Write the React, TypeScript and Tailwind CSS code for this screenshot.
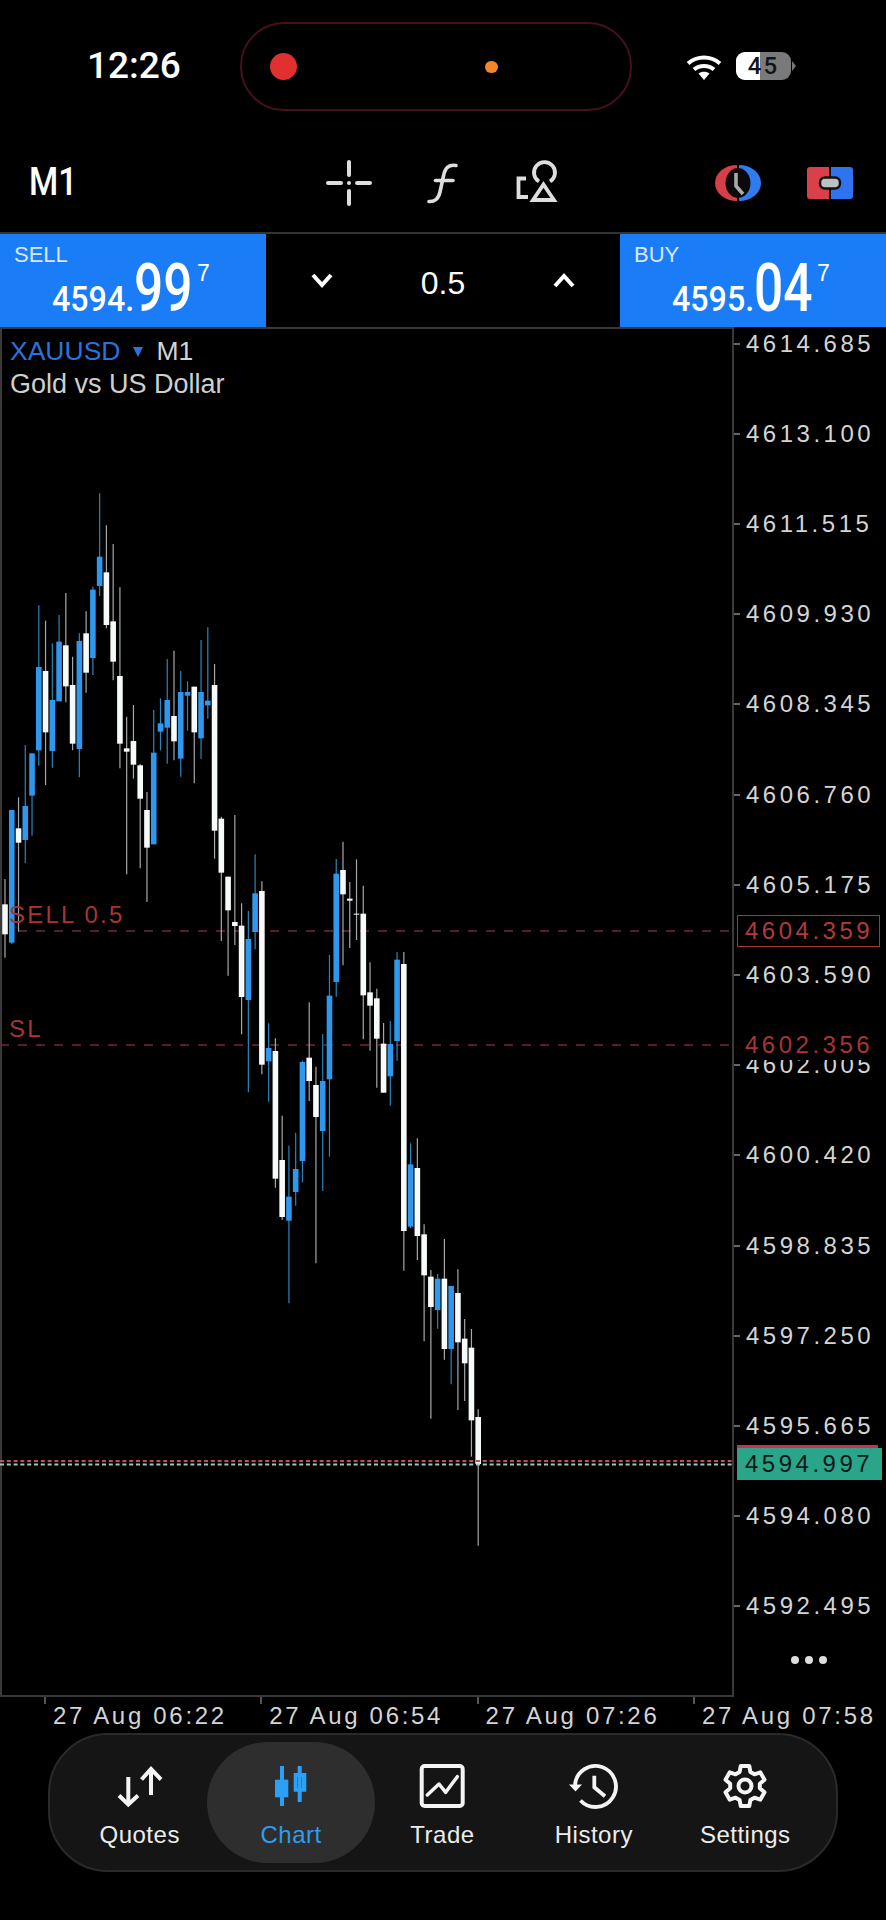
import React from 'react';

const sans = "font-['Liberation_Sans',Arial,sans-serif]";

// candle data read off the chart: [wickTop, bodyTop, bodyBottom, wickBottom, blue?]
type Candle = [number, number, number, number, number];

const groupA: Candle[] = [
  [1197, 1273, 1363, 1433, 0], [990, 990, 1388, 1392, 1], [952, 1045, 1088, 1355, 0], [795, 978, 1080, 1150, 1],
  [820, 820, 947, 1067, 1], [376, 561, 811, 857, 1], [422, 573, 757, 915, 0], [490, 660, 813, 863, 1],
  [405, 485, 664, 664, 1], [339, 496, 619, 667, 0], [530, 615, 791, 811, 0], [460, 483, 807, 892, 1],
  [394, 460, 578, 638, 0], [320, 329, 534, 585, 1], [40, 230, 318, 348, 1], [136, 277, 435, 445, 0],
  [192, 424, 545, 601, 0], [322, 588, 791, 865, 0], [710, 805, 815, 1183, 0], [675, 783, 854, 896, 0],
  [852, 856, 956, 1165, 0], [936, 990, 1103, 1266, 0], [690, 818, 1093, 1093, 1], [655, 730, 755, 811, 1],
  [537, 660, 743, 851, 1], [512, 708, 784, 841, 0], [573, 636, 836, 890, 1], [604, 636, 647, 752, 1],
  [620, 620, 757, 910, 0], [480, 636, 775, 836, 1], [442, 662, 676, 716, 1],
];
const groupB: Candle[] = [
  [-468, -405, 32, 116, 0], [-10, -4, 158, 363, 0], [170, 170, 271, 467, 0], [-15, 306, 318, 375, 0],
  [250, 317, 531, 643, 0], [273, 357, 540, 817, 1], [103, 220, 336, 388, 1], [184, 213, 734, 763, 0],
  [610, 684, 724, 845, 1], [655, 693, 1076, 1103, 0], [887, 1020, 1191, 1200, 0], [977, 1130, 1202, 1450, 1],
  [938, 1047, 1116, 1157, 1], [722, 726, 1023, 1087, 1], [547, 713, 783, 843, 0], [740, 795, 891, 1330, 0],
  [642, 783, 933, 1113, 1], [405, 527, 778, 1010, 1], [117, 161, 486, 530, 1], [65, 150, 223, 436, 0],
  [186, 236, 242, 384, 0], [118, 281, 283, 360, 0], [197, 281, 526, 658, 0], [427, 517, 557, 692, 0],
  [506, 535, 656, 803, 0], [609, 671, 818, 818, 0], [603, 672, 769, 857, 1], [396, 419, 663, 722, 1],
];
const groupC: Candle[] = [
  [-744, -708, 93, 212, 0], [-170, -107, 80, 84, 1], [-185, -96, 108, 180, 0], [73, 103, 226, 424, 0],
  [210, 230, 321, 656, 0], [222, 236, 330, 386, 1], [117, 236, 447, 479, 0], [258, 258, 447, 553, 1],
  [208, 279, 427, 630, 0], [357, 416, 490, 603, 0], [387, 443, 661, 770, 0], [628, 651, 792, 1037, 0],
];

const toReal = (rows: Candle[], origin: number) =>
  rows.map(([a, b, c, d, blue]) => [origin + a / 3, origin + b / 3, origin + c / 3, origin + d / 3, blue] as Candle);

const candles = [...toReal(groupA, 480), ...toReal(groupB, 820), ...toReal(groupC, 1200)];

const prices = [
  '4614.685', '4613.100', '4611.515', '4609.930', '4608.345', '4606.760', '4605.175', '4603.590',
  '4602.005', '4600.420', '4598.835', '4597.250', '4595.665', '4594.080', '4592.495',
];
const times = ['27 Aug 06:22', '27 Aug 06:54', '27 Aug 07:26', '27 Aug 07:58'];

const CandleChart = () => (
  <svg className="absolute left-0 top-0" width="732" height="1370" viewBox="0 327 732 1370">
    <line x1="18" x2="732" y1="931" y2="931" stroke="#702a34" strokeWidth="1.3" strokeDasharray="9 9" />
    <line x1="0" x2="732" y1="1045" y2="1045" stroke="#702a34" strokeWidth="1.3" strokeDasharray="9 9" />
    {candles.map(([wt, bt, bb, wb, blue], i) => {
      const x = 5 + i * 6.76;
      return (
        <g key={i}>
          <line x1={x} x2={x} y1={wt} y2={wb} stroke={blue ? '#2a86bd' : '#a8a8a8'} strokeWidth="1.2" />
          <rect x={x - 2.8} y={bt} width="5.6" height={Math.max(bb - bt, 1)} fill={blue ? '#2f97ec' : '#f6fbfa'} />
        </g>
      );
    })}
    <line x1="0" x2="732" y1="1461" y2="1461" stroke="#c84a5e" strokeWidth="2" strokeDasharray="4 2.8" />
    <line x1="0" x2="732" y1="1464.500" y2="1464.500" stroke="#9cc9bb" strokeWidth="2" strokeDasharray="4 2.8" />
  </svg>
);

const StatusBar = () => (
  <div className="flex h-[134px] items-start">
    <div className="w-[240px] pl-[87px] pt-[45px] font-['Roboto',sans-serif] text-[37px] font-medium leading-[42px] text-white">12:26</div>
    <div className="mt-[22px] flex h-[89px] w-[392px] items-center rounded-[44px] border-2 border-[#47101a] pl-[28px]">
      <div className="h-[27px] w-[27px] rounded-full bg-[#e0312f]" />
      <div className="ml-[188px] h-[12px] w-[13px] rounded-full bg-[#f0872c]" />
    </div>
    <div className="ml-[54px] mt-[52px] flex items-start gap-[14px]">
      <svg className="mt-[2px]" width="36" height="26" viewBox="0 0 36 26" fill="none" stroke="#fff" strokeWidth="4">
        <path d="M2 9.500C11 1.500 25 1.500 34 9.500" />
        <path d="M8 15.500C13.500 10.800 22.500 10.800 28 15.500" />
        <path d="M18 26l-5.500-6.500C15.500 17 20.500 17 23.500 19.500z" fill="#fff" stroke="none" />
      </svg>
      <div className="flex items-center">
        <div className="relative flex h-[28px] w-[55px] items-center justify-center overflow-hidden rounded-[9px] bg-[#7a7a7a]">
          <div className="absolute inset-y-0 left-0 w-[24px] bg-white" />
          <span className="relative font-['Roboto',sans-serif] text-[24px] font-medium tracking-[2px] text-[#151515]">45</span>
        </div>
        <svg className="ml-[1px]" width="4" height="10" viewBox="0 0 4 10"><path d="M0 0l4 5-4 5z" fill="#777" /></svg>
      </div>
    </div>
  </div>
);

const Toolbar = () => (
  <div className="relative h-[98px]">
    <div className="absolute left-[29px] top-[28px] origin-left scale-x-[0.88] font-['Roboto',sans-serif] text-[38px] font-medium leading-[40px] text-white">M1</div>
    <svg className="absolute left-[326px] top-[26px]" width="46" height="46" viewBox="0 0 46 46" stroke="#dedede" strokeWidth="4" strokeLinecap="round">
      <path d="M23 2v13M23 31v13M2 23h13M31 23h13" />
      <circle cx="23" cy="23" r="2" fill="#dedede" stroke="none" />
    </svg>
    <svg className="absolute left-[425px] top-[26px]" width="36" height="46" viewBox="0 0 36 46" fill="none" stroke="#dedede" strokeWidth="3.600" strokeLinecap="round">
      <path d="M31 5.500C24 4 20 8 18.500 16L15 32C13.500 39 9 42 4 41.500" />
      <path d="M10.500 20.500H28" />
    </svg>
    <svg className="absolute left-[515px] top-[26px]" width="44" height="44" viewBox="0 0 44 44" fill="none" stroke="#dedede" strokeWidth="3.800">
      <path d="M24 21.500A10.500 10.500 0 1 1 35 21.500" />
      <path d="M11 18.500H3.500V37H13" />
      <path d="M28.500 24.500L39 40H18z" />
    </svg>
    <svg className="absolute left-[715px] top-[31px]" width="46" height="36" viewBox="0 0 46 36">
      <path d="M22 0A22 18 0 0 0 22 36z" fill="#d53f45" />
      <path d="M24 0A22 18 0 0 1 24 36z" fill="#2f7cf0" />
      <ellipse cx="23" cy="18" rx="12.500" ry="15" fill="#0a0a0a" />
      <path d="M21 8v13l7 8" fill="none" stroke="#a9a9a9" strokeWidth="3.600" />
    </svg>
    <svg className="absolute left-[807px] top-[33px]" width="46" height="32" viewBox="0 0 46 32">
      <path d="M3 0h19v32H3a3 3 0 0 1-3-3V3a3 3 0 0 1 3-3z" fill="#d8404a" />
      <path d="M24 0h19a3 3 0 0 1 3 3v26a3 3 0 0 1-3 3H24z" fill="#2f74ee" />
      <rect x="13" y="10.500" width="20" height="11" rx="5" fill="#bcc2c4" stroke="#111" strokeWidth="2.500" />
    </svg>
  </div>
);

const Quote = ({ label, big, small }: { label: string; big: string; small: string }) => (
  <div className="h-[93px] w-[266px] bg-[#1a7cf7] pt-[8px] text-white">
    <div className="pl-[14px] text-[22px] leading-[26px] text-[#d8e9ff]">{label}</div>
    <div className="-mt-[14px] flex items-baseline pl-[52px] font-['Roboto',sans-serif] font-medium">
      <span className="w-[82px] origin-left scale-x-[0.92] text-[35px] leading-[40px]">{small}</span>
      <span className="w-[63px] origin-left scale-x-[0.78] text-[66px] leading-[70px]">{big}</span>
      <span className={`mt-[7px] self-start text-[23px] font-normal leading-[24px] ${sans}`}>7</span>
    </div>
  </div>
);

const TradeBar = () => (
  <div className="flex h-[95px] border-t-2 border-[#333]">
    <Quote label="SELL" small="4594." big="99" />
    <div className="flex flex-1 items-center justify-between px-[45px] text-white">
      <svg width="22" height="15" viewBox="0 0 22 15" fill="none" stroke="#fff" strokeWidth="4"><path d="M2 2l9 10 9-10" /></svg>
      <span className="mt-[4px] text-[32px] leading-[36px]">0.5</span>
      <svg width="22" height="15" viewBox="0 0 22 15" fill="none" stroke="#fff" strokeWidth="4"><path d="M2 13l9-10 9 10" /></svg>
    </div>
    <Quote label="BUY" small="4595." big="04" />
  </div>
);

const ChartArea = () => (
  <div className="relative flex h-[1370px] text-[#d4d4d4]">
    <div className="relative h-[1370px] w-[734px] shrink-0 border-2 border-[#3a3a3a]">
      <div className="absolute left-[8px] top-[7px] flex items-center text-[26.5px] leading-[30px]">
        <span className="text-[#2a72de]">XAUUSD</span>
        <svg className="ml-[13px] mr-[13px]" width="10" height="11" viewBox="0 0 10 11"><path d="M0 1h10L5 11z" fill="#2a72de" /></svg>
        <span className="text-[#d4d4d4]">M1</span>
      </div>
      <div className="absolute left-[8px] top-[40px] text-[27px] leading-[30px] text-[#cfcfcf]">Gold vs US Dollar</div>
    </div>
    <CandleChart />
    <div className="absolute left-[9px] top-[575px] text-[24px] leading-[26px] tracking-[2.2px] text-[#a83434]">SELL 0.5</div>
    <div className="absolute left-[9px] top-[689px] text-[24px] leading-[26px] tracking-[2.2px] text-[#a83434]">SL</div>

    <div className="flex flex-1 flex-col">
      {prices.map((p, i) => (
        <div key={p} className={`flex h-[90.2px] shrink-0 items-center ${i === 0 ? '-mt-[28.4px]' : ''}`}>
          <div className="h-[2px] w-[6px] bg-[#666]" />
          <span className="ml-[6px] text-[24px] tracking-[3.5px]">{p}</span>
        </div>
      ))}
    </div>

    <div className="absolute left-[737px] top-[588px] flex h-[32px] w-[143px] items-center border border-[#a83434] pl-[7px] text-[24px] tracking-[3.5px] text-[#b23a3a]">4604.359</div>
    <div className="absolute left-[737px] top-[702px] flex h-[31px] w-[149px] items-center bg-black pl-[8px] text-[24px] tracking-[3.5px] text-[#a83434]">4602.356</div>
    <div className="absolute left-[737px] top-[1118px] h-[3px] w-[141px] bg-[#c8324a]" />
    <div className="absolute left-[737px] top-[1121px] flex h-[32px] w-[145px] items-center bg-[#2aa58a] pl-[8px] text-[24px] tracking-[3.5px] text-[#0a1a16]">4594.997</div>
    <div className="absolute left-[791px] top-[1329px] flex gap-[6px]">
      <div className="h-[8px] w-[8px] rounded-full bg-[#ddd]" />
      <div className="h-[8px] w-[8px] rounded-full bg-[#ddd]" />
      <div className="h-[8px] w-[8px] rounded-full bg-[#ddd]" />
    </div>
  </div>
);

const TimeAxis = () => (
  <div className="flex h-[36px] pl-[44px] text-[#d4d4d4]">
    {times.map((t) => (
      <div key={t} className="flex h-full w-[216.3px] shrink-0">
        <div className="h-[7px] w-[2px] bg-[#555]" />
        <span className="ml-[7px] mt-[6px] whitespace-nowrap text-[24px] leading-[26px] tracking-[2.7px]">{t}</span>
      </div>
    ))}
  </div>
);

const QuotesIcon = () => (
  <svg width="46" height="44" viewBox="0 0 46 44" fill="none" stroke="#f4f4f4" strokeWidth="4">
    <path d="M11.300 13v27" />
    <path d="M2 31.500l9.300 9 9.700-9" />
    <path d="M34 31V5" />
    <path d="M24.500 15.500L34 5l10 10.500" />
  </svg>
);

const ChartIcon = () => (
  <svg width="34" height="44" viewBox="0 0 34 44" fill="#2ba0f5">
    <rect x="6" y="2" width="4" height="40" />
    <rect x="1" y="15.700" width="13.300" height="17.600" />
    <rect x="23.700" y="2" width="4" height="36" />
    <path d="M19.700 9h12.600v18.700H19.700zM23.500 13v11h4.500V13z" fillRule="evenodd" />
  </svg>
);

const TradeIcon = () => (
  <svg width="46" height="44" viewBox="0 0 46 44" fill="none" stroke="#f4f4f4" strokeWidth="4">
    <rect x="2.700" y="2" width="41" height="40" rx="3" />
    <path d="M8.300 31L20 20l6.700 8.300 11.600-15.600" strokeWidth="3.500" strokeLinecap="round" strokeLinejoin="round" />
  </svg>
);

const HistoryIcon = () => (
  <svg width="52" height="46" viewBox="0 0 52 46" fill="none" stroke="#f4f4f4" strokeWidth="3.800">
    <path d="M7 22A20.500 20.500 0 1 1 12.500 37.500" />
    <path d="M26.300 12.700V24.300L37 33.300" />
    <path d="M1 21.500h13l-6.500 7z" fill="#f4f4f4" stroke="none" />
  </svg>
);

// six-toothed outline, computed so that the teeth stay even
const gearPath = () => {
  const pt = (r: number, deg: number) => {
    const a = (deg * Math.PI) / 180;
    return `${(23 + r * Math.cos(a)).toFixed(2)} ${(23 + r * Math.sin(a)).toFixed(2)}`;
  };
  const pts: string[] = [];
  for (let k = 0; k < 6; k++) {
    const a = -90 + 60 * k;
    pts.push(pt(15, a - 21), pt(20.5, a - 12), pt(20.5, a + 12), pt(15, a + 21));
  }
  return `M${pts.join('L')}Z`;
};

const SettingsIcon = () => (
  <svg width="46" height="46" viewBox="0 0 46 46" fill="none" stroke="#f4f4f4" strokeWidth="4" strokeLinejoin="round">
    <path d={gearPath()} />
    <circle cx="23" cy="23" r="6.500" />
  </svg>
);

const tabs = [
  { label: 'Quotes', icon: <QuotesIcon /> },
  { label: 'Chart', icon: <ChartIcon />, active: true },
  { label: 'Trade', icon: <TradeIcon /> },
  { label: 'History', icon: <HistoryIcon /> },
  { label: 'Settings', icon: <SettingsIcon /> },
];

const Dock = () => (
  <div className="mx-[48px] flex h-[139px] w-[790px] items-center rounded-[60px] border-2 border-[#2a2a2a] bg-[#151515] pl-[14px]">
    {tabs.map((t) => (
      <div
        key={t.label}
        className={`flex h-[121px] shrink-0 flex-col items-center ${t.active ? 'relative -mx-[8px] w-[167.4px] rounded-[64px] bg-[#2e2e2e]' : 'w-[151.4px]'}`}
      >
        <div className="mt-[22px] flex h-[44px] items-center justify-center">{t.icon}</div>
        <span className={`mt-[13px] text-[24px] leading-[28px] tracking-[0.5px] ${t.active ? 'text-[#2e9cf0]' : 'text-[#ececec]'}`}>{t.label}</span>
      </div>
    ))}
  </div>
);

export default function App() {
  return (
    <div className={`h-[1920px] w-[886px] overflow-hidden bg-black ${sans}`}>
      <StatusBar />
      <Toolbar />
      <TradeBar />
      <ChartArea />
      <TimeAxis />
      <Dock />
    </div>
  );
}
